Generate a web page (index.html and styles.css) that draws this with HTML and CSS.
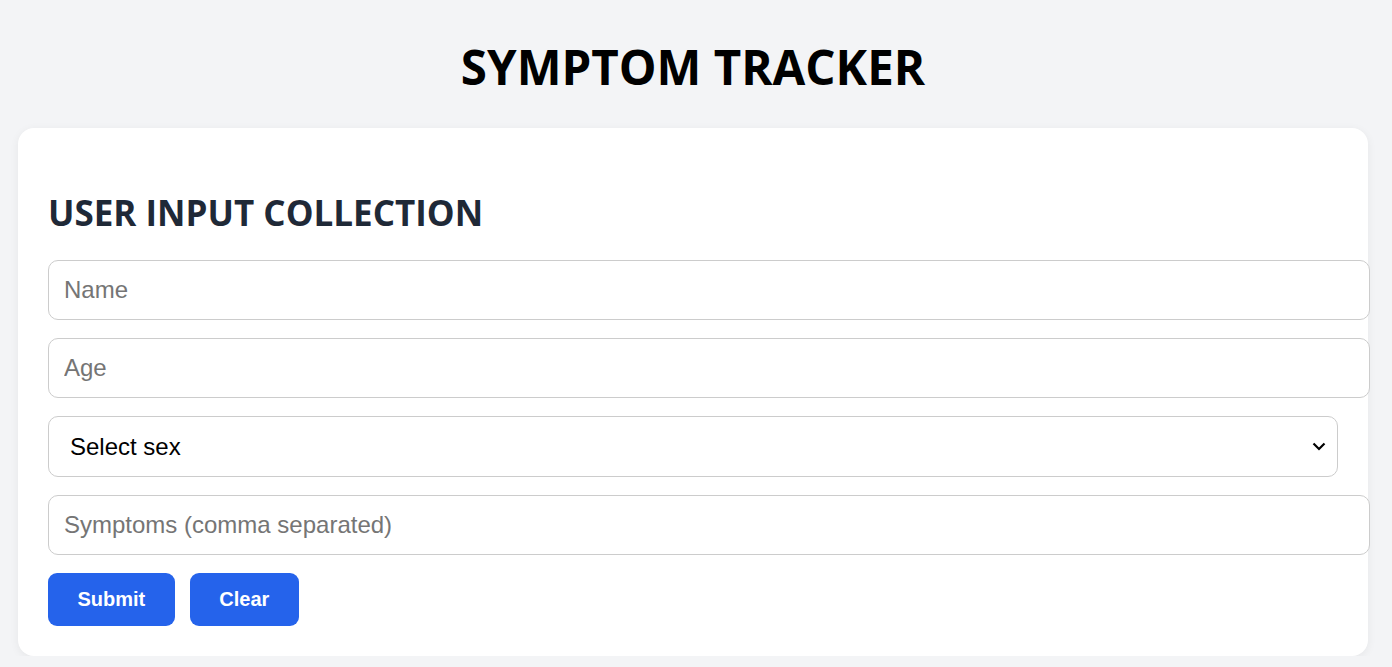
FILE: index.html
```html
<!DOCTYPE html>
<html lang="en">
<head>
<meta charset="utf-8">
<title>Symptom Tracker</title>
<link rel="stylesheet" href="styles.css">
</head>
<body>
  <h1 class="page-title">SYMPTOM TRACKER</h1>
  <main class="card">
    <h2 class="section-title">USER INPUT COLLECTION</h2>
    <form class="form">
      <input class="field" type="text" placeholder="Name">
      <input class="field" type="text" placeholder="Age">
      <div class="select-wrap">
        <select class="select">
          <option>Select sex</option>
          <option>Male</option>
          <option>Female</option>
        </select>
        <svg class="chevron" width="14" height="9" viewBox="0 0 14 9" aria-hidden="true"><path d="M1.5 1.5 L7 7 L12.5 1.5" fill="none" stroke="#000" stroke-width="2.2"/></svg>
      </div>
      <input class="field" type="text" placeholder="Symptoms (comma separated)">
      <div class="actions">
        <button class="btn" type="button">Submit</button>
        <button class="btn" type="button">Clear</button>
      </div>
    </form>
  </main>
</body>
</html>
```
FILE: styles.css
```css
html, body {
  margin: 0;
  padding: 0;
}
body {
  background: #f3f4f6;
  padding: 0 24px 0 18px;
  font-family: "Open Sans", "Noto Sans", sans-serif;
}
.page-title {
  margin: 35px 0 29px;
  font-size: 47.5px;
  line-height: 64px;
  font-weight: 700;
  color: #000;
  text-align: center;
}
.card {
  background: #fff;
  border-radius: 16px;
  padding: 30px;
  box-shadow: 0 2px 10px rgba(0, 0, 0, 0.06);
}
.section-title {
  margin: 31px 0 23px;
  font-size: 35px;
  line-height: 48px;
  font-weight: 700;
  color: #1f2937;
}
.form {
  display: flex;
  flex-direction: column;
  gap: 18px;
  align-items: flex-start;
}
.field {
  width: 100%;
  box-sizing: content-box;
  padding: 15px;
  height: 28px;
  border: 1px solid #cccccc;
  border-radius: 10px;
  font-family: "Liberation Sans", Arial, sans-serif;
  font-size: 24px;
  color: #000;
  background: #fff;
  outline: none;
}
.field::placeholder {
  color: #757575;
}
.select-wrap {
  position: relative;
  width: 100%;
}
.select {
  display: block;
  width: 100%;
  height: 61px;
  box-sizing: border-box;
  padding: 0 40px 0 21px;
  border: 1px solid #cccccc;
  border-radius: 10px;
  font-family: "Liberation Sans", Arial, sans-serif;
  font-size: 24px;
  color: #000;
  background: #fff;
  appearance: none;
  -webkit-appearance: none;
  outline: none;
}
.chevron {
  position: absolute;
  right: 12px;
  top: 26px;
  pointer-events: none;
}
.actions {
  display: flex;
  gap: 15px;
}
.btn {
  height: 53px;
  padding: 0 29.5px;
  border: none;
  border-radius: 9px;
  background: #2563eb;
  color: #fff;
  font-family: "Liberation Sans", Arial, sans-serif;
  font-size: 20px;
  font-weight: 700;
  cursor: pointer;
}
```
